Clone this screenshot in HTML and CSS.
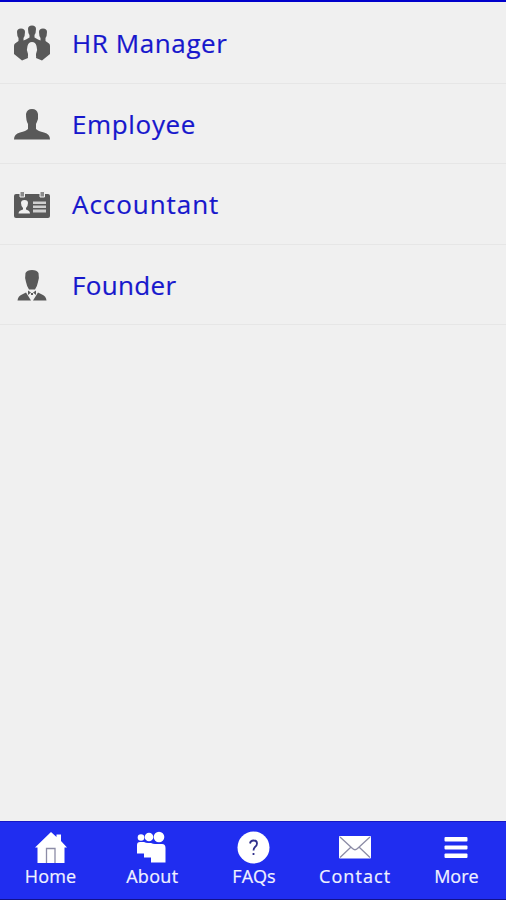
FILE: index.html
```html
<!DOCTYPE html>
<html lang="en">
<head>
<meta charset="utf-8">
<title>Roles</title>
<link rel="stylesheet" href="styles.css">
</head>
<body>
<main class="list">
  <a class="row"><svg class="icon" viewBox="0 0 38 38"><path d="M4 7Q4 3.500 8 3.500T12 7Q12 11 10.500 13V15.500L13 14.500L16.500 12.500V10Q15 8 15 4Q15 .5 19 .5T23 4Q23 8 21.500 10V12.500L25 14.500L27.500 15.500V13Q26 11 26 7Q26 3.500 30 3.500T34 7Q34 11 32.500 13V16L36 18.500Q37 19 37 21V29L29 35.500L23 33V29Q25 25 23.500 21Q22.500 17 19 17T14.500 21Q13 25 15 29V33L9 35.500L1 29V21Q1 19 2 18.500L5.500 16V13Q4 11 4 7Z"/><path class="cut" d="M15 21Q16 18 19 18T23 21Q23.500 25 21 27V30L23.500 32Q19 35 14.500 32L17 30V27Q14.500 25 15 21Z"/></svg><span class="role hr">HR Manager</span></a>
  <a class="row"><svg class="icon" viewBox="0 0 38 38"><path d="M13 8Q14 3 19 3T25 8V13Q24 16 23 18V23Q25 25 31 26.500Q37 28 37 33.500H1Q1 28 7 26.500Q13 25 15 23V18Q13 15 13 8Z"/></svg><span class="role employee">Employee</span></a>
  <a class="row"><svg class="icon" viewBox="0 0 38 38"><path d="M3 8H35Q37 8 37 10V30Q37 32 35 32H3Q1 32 1 30V10Q1 8 3 8Z"/><path class="clip" d="M7 5.500H11.500V11H7ZM27 5.500H31.500V11H27Z"/><path class="cut" d="M8 17Q8 14 11.500 14T15 17Q15 20 13 22V23.500Q17 24.500 17 27.500H5.500Q5.500 24.500 10 23.500V22Q8 20 8 17Z"/><path class="rule" d="M20 15.500H33V18H20ZM20 19.500H33V22H20ZM20 23.500H33V26.500H20Z"/></svg><span class="role accountant">Accountant</span></a>
  <a class="row"><svg class="icon" viewBox="0 0 38 38"><path d="M12.500 6Q14 3 19 3T25.500 6Q26.500 11 25 15Q24 20 22 22.500H16Q14 20 13 15Q11.500 11 12.500 6Z"/><path d="M13 25.500L18 33.500H4.500Q5 29 9 27.500ZM25 25.500L29 27.500Q33 29 33.500 33.500H20ZM15 23.500L18 25.500L15 28ZM23 23.500L20 25.500L23 28ZM18 26H20V28H18Z"/></svg><span class="role founder">Founder</span></a>
</main>
<nav class="bar">
  <a class="tab"><svg class="glyph" viewBox="0 0 34 34"><path d="M1 16.500L17 1L22.500 6V3.500H27V10L33 16.500H30.500V32H3.500V16.500Z"/><path class="line" d="M12.500 32V17.500H21V32"/></svg><span class="home">Home</span></a>
  <a class="tab"><svg class="glyph" viewBox="0 0 34 34"><circle cx="6" cy="6.500" r="3.300"/><circle cx="14" cy="6" r="4.300"/><circle cx="24" cy="6" r="5.300"/><path d="M2 14Q2 11 5 11H9Q11 12 13 12H16Q18 13 20 13H27Q30.500 13 30.500 17V31.500H16V26.500H9V22.500H2Z"/></svg><span class="about">About</span></a>
  <a class="tab"><svg class="glyph" viewBox="0 0 34 34"><circle cx="17.500" cy="16.500" r="16"/><path class="question" d="M14 12.500Q14.500 9.500 17.500 9.500Q21 9.500 21 12.500Q21 14.500 19 16Q17.500 17.500 17.500 19.500M17.500 22V24"/></svg><span class="faqs">FAQs</span></a>
  <a class="tab"><svg class="glyph" viewBox="0 0 34 34"><rect x="2" y="5" width="32" height="22.500" rx="1"/><path class="line" d="M3 6L15.500 17.500Q18 20 20.500 17.500L33 6M3 26.500L13.500 16.500M33 26.500L22.500 16.500"/></svg><span class="contact">Contact</span></a>
  <a class="tab"><svg class="glyph" viewBox="0 0 34 34"><rect x="6.500" y="6" width="23" height="4.500" rx="1"/><rect x="6.500" y="14.500" width="23" height="4" rx="1"/><rect x="6.500" y="22.500" width="23" height="4.500" rx="1"/></svg><span class="more">More</span></a>
</nav>
</body>
</html>
```
FILE: styles.css
```css
* { box-sizing: border-box; }
body {
  margin: 0;
  height: 900px;
  display: flex;
  flex-direction: column;
  background: #f0f0f0;
  border-top: 2px solid #0000cc;
  font-family: "Open Sans", sans-serif;
}
.list { flex: 1; padding-top: 1px; }
.row {
  display: flex;
  align-items: center;
  height: 80.600px;
  padding: 3px 0 0 13px;
  border-bottom: 1px solid #e6e6e6;
  color: #1717cc;
  font-size: 26px;
  line-height: 36px;
}
.icon { width: 38px; height: 38px; margin-right: 21px; fill: #595959; }
.icon .cut { fill: #f0f0f0; }
.icon .rule { fill: #d0d0d0; }
.icon .clip { fill: #8b8b8b; stroke: #f0f0f0; stroke-width: 1; }
.role { white-space: nowrap; margin-top: -2px; -webkit-text-stroke: 0.200px #1717cc; }
.hr { letter-spacing: 0.600px; }
.employee { letter-spacing: 0.650px; }
.accountant { letter-spacing: 0.950px; }
.founder { letter-spacing: 0.350px; }
.bar {
  display: grid;
  grid-template-columns: repeat(5, 1fr);
  height: 79px;
  background: #202df0;
  border-top: 1px solid #1717c4;
  border-bottom: 1px solid #12128c;
  color: #f0f2ff;
  font-size: 18px;
  line-height: 24px;
  -webkit-text-stroke: 0.200px #f0f2ff;
}
.tab { display: flex; flex-direction: column; align-items: center; padding-top: 9px; white-space: nowrap; }
.tab span { margin-top: -1px; }
.glyph { width: 34px; height: 34px; fill: #fff; }
.glyph .line { fill: none; stroke: #8c8ca6; stroke-width: 1.300; }
.glyph .question { fill: none; stroke: #30308c; stroke-width: 1.800; }
.about { letter-spacing: 0.300px; padding-left: 1px; }
.contact { letter-spacing: 1.100px; padding-left: 2px; }
.faqs { padding-left: 2px; }
.home { letter-spacing: 0.200px; }
.more { padding-left: 2px; }
```
